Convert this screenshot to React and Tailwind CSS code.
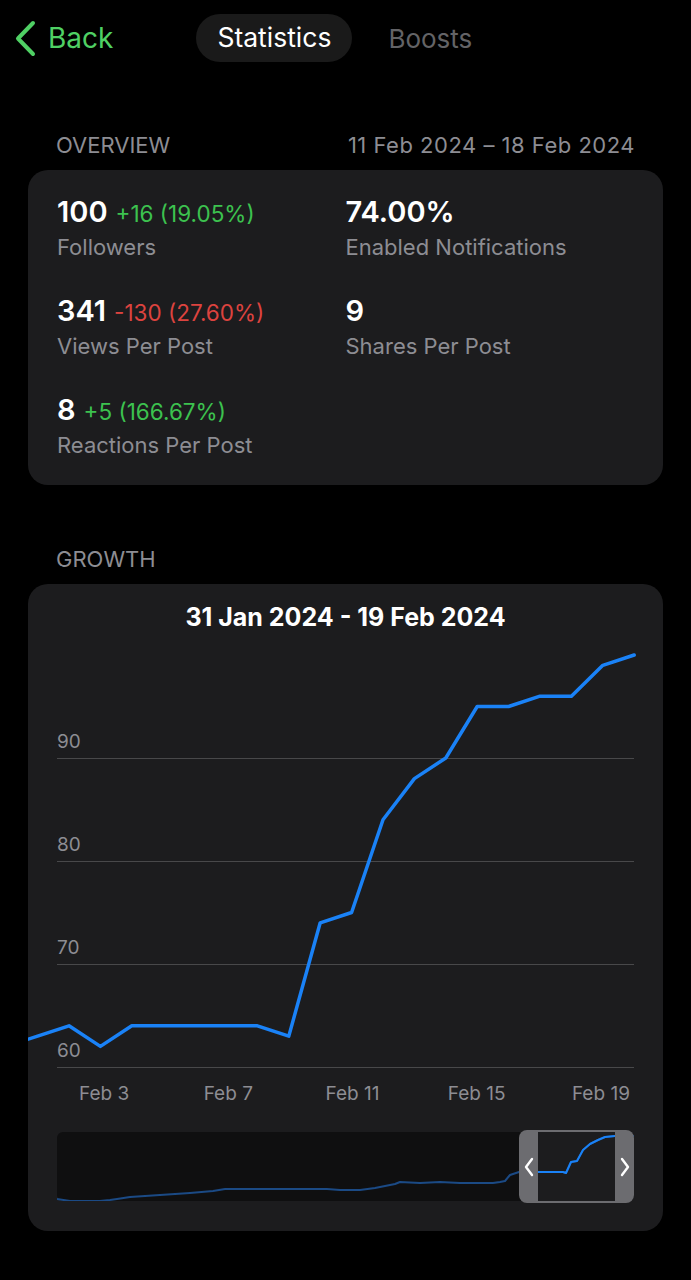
const overview = [
  { value: '100', delta: '+16 (19.05%)', tone: 'up', label: 'Followers' },
  { value: '74.00%', label: 'Enabled Notifications' },
  { value: '341', delta: '-130 (27.60%)', tone: 'down', label: 'Views Per Post' },
  { value: '9', label: 'Shares Per Post' },
  { value: '8', delta: '+5 (166.67%)', tone: 'up', label: 'Reactions Per Post' },
];

// daily followers, 31 Jan -> 20 Feb
const growth = [62, 63, 64, 62, 64, 64, 64, 64, 64, 63, 74, 75, 84, 88, 90, 95, 95, 96, 96, 99, 100];

const gridRows = ['90', '80', '70', '60'];
const xLabels = ['Feb 3', 'Feb 7', 'Feb 11', 'Feb 15', 'Feb 19'];

// overview strip, in px inside the 577x69 mini box
const miniPoints = [
  [0, 67], [13, 69], [43, 69], [53, 68], [60, 67], [73, 65], [103, 63], [133, 61], [156, 59],
  [168, 57], [270, 57], [283, 58], [303, 58], [318, 56], [338, 52], [343, 50], [363, 51],
  [383, 50], [403, 51], [436, 51], [443, 50], [448, 49], [453, 43], [462, 40], [481, 40],
  [506, 40], [509, 41], [514, 30], [520, 29], [526, 18], [533, 12], [541, 8], [548, 5],
  [558, 4], [577, 4],
];

function StatCell({ value, delta, tone, label }) {
  return (
    <div className="flex flex-col">
      <div className="h-[32px] whitespace-nowrap leading-[32px]">
        <span className="text-[29px] font-semibold text-white">{value}</span>
        {delta && (
          <span className={`ml-[8px] text-[22.5px] ${tone === 'up' ? 'text-[#3cc24f]' : 'text-[#dc433f]'}`}>
            {delta}
          </span>
        )}
      </div>
      <span className="mt-[6px] text-[22px] leading-[26px] text-[#8d8d93]">{label}</span>
    </div>
  );
}

function GrowthChart() {
  const points = growth
    .map((v, i) => `${(6.2 + i * 31.4 - 28).toFixed(1)},${(424 - (v - 60) * 10.3).toFixed(1)}`)
    .join(' ');

  return (
    <div className="relative">
      {gridRows.map((label, i) => (
        <div
          key={label}
          className={`mx-[29px] flex items-end border-b border-[#48484a] pb-[5px] ${i === 0 ? 'h-[116px]' : 'h-[103px]'}`}
        >
          <span className="text-[19px] leading-[22px] text-[#8d8d93]">{label}</span>
        </div>
      ))}
      <svg className="absolute left-0 top-0" width="635" height="425">
        <polyline
          points={points}
          fill="none"
          stroke="#1a82f7"
          strokeWidth="3.5"
          strokeLinejoin="round"
          strokeLinecap="round"
        />
      </svg>
    </div>
  );
}

function HandleChevron({ dir }) {
  return (
    <svg width="10" height="20" viewBox="0 0 10 20" fill="none">
      <path
        d={dir === 'left' ? 'M8 2 L2 10 L8 18' : 'M2 2 L8 10 L2 18'}
        stroke="white"
        strokeWidth="2.4"
        strokeLinecap="round"
        strokeLinejoin="round"
      />
    </svg>
  );
}

function MiniChart() {
  const pts = miniPoints.map(([x, y]) => `${x},${y}`).join(' ');
  return (
    <div className="relative mx-[29px] mt-[27px] h-[69px] rounded-[6px] bg-[#0f0f10]">
      {/* selected window */}
      <div className="absolute left-[481px] top-[-2px] h-[73px] w-[77px] border-y-2 border-[#6c6c70] bg-[#1c1c1e]" />
      <svg className="absolute left-0 top-0" width="577" height="69">
        <defs>
          <clipPath id="win">
            <rect x="481" y="0" width="77" height="69" />
          </clipPath>
        </defs>
        <polyline points={pts} fill="none" stroke="#1b4a85" strokeWidth="2" strokeLinejoin="round" />
        <polyline points={pts} fill="none" stroke="#1a82f7" strokeWidth="2" strokeLinejoin="round" clipPath="url(#win)" />
      </svg>
      <div className="absolute left-[462px] top-[-2px] flex h-[73px] w-[19px] items-center justify-center rounded-l-[8px] bg-[#6c6c70]">
        <HandleChevron dir="left" />
      </div>
      <div className="absolute left-[558px] top-[-2px] flex h-[73px] w-[19px] items-center justify-center rounded-r-[8px] bg-[#6c6c70]">
        <HandleChevron dir="right" />
      </div>
    </div>
  );
}

export default function App() {
  return (
    <div className="min-h-[1280px] w-[691px] bg-black font-['Inter','Noto_Sans',sans-serif] text-white">
      {/* Header */}
      <div className="flex h-[76px] items-center">
        <button className="ml-[14px] flex items-center gap-[12px] text-[#4fd064]">
          <svg width="22" height="37" viewBox="0 0 22 37" fill="none">
            <path d="M19 3 L4 18.5 L19 34" stroke="currentColor" strokeWidth="4" strokeLinecap="round" strokeLinejoin="round" />
          </svg>
          <span className="text-[28px] leading-[34px]">Back</span>
        </button>
        <div className="ml-[83px] flex items-center gap-[15px]">
          <div className="flex h-[48px] items-center rounded-full bg-[#1a1a1a] px-[21px] text-[26.5px] text-white">
            Statistics
          </div>
          <div className="flex h-[48px] items-center px-[21px] text-[26px] text-[#636366]">Boosts</div>
        </div>
      </div>

      {/* Overview */}
      <div className="mt-[57px] flex items-center justify-between pl-[56px] pr-[56px] text-[22px] leading-[24px] text-[#8d8d93]">
        <span>OVERVIEW</span>
        <span className="tracking-[0.5px]">11 Feb 2024 – 18 Feb 2024</span>
      </div>
      <div className="mx-[28px] mt-[13px] grid grid-cols-2 gap-y-[35px] rounded-[20px] bg-[#1c1c1e] px-[29px] pb-[27px] pt-[26px]">
        {overview.map((s) => (
          <StatCell key={s.label} {...s} />
        ))}
      </div>

      {/* Growth */}
      <div className="mt-[62px] px-[56px] text-[22px] leading-[24px] text-[#8d8d93]">GROWTH</div>
      <div className="mx-[28px] mt-[13px] overflow-hidden rounded-[20px] bg-[#1c1c1e] pb-[30px] pt-[20px]">
        <div className="text-center text-[25px] font-bold leading-[26px] text-white">31 Jan 2024 - 19 Feb 2024</div>
        <div className="mt-[13px]">
          <GrowthChart />
        </div>
        <div className="mt-[15px] flex pl-[14px]">
          {xLabels.map((l) => (
            <span key={l} className="w-[125px] text-center text-[19px] leading-[22px] text-[#8d8d93]">
              {l}
            </span>
          ))}
        </div>
        <MiniChart />
      </div>
    </div>
  );
}
